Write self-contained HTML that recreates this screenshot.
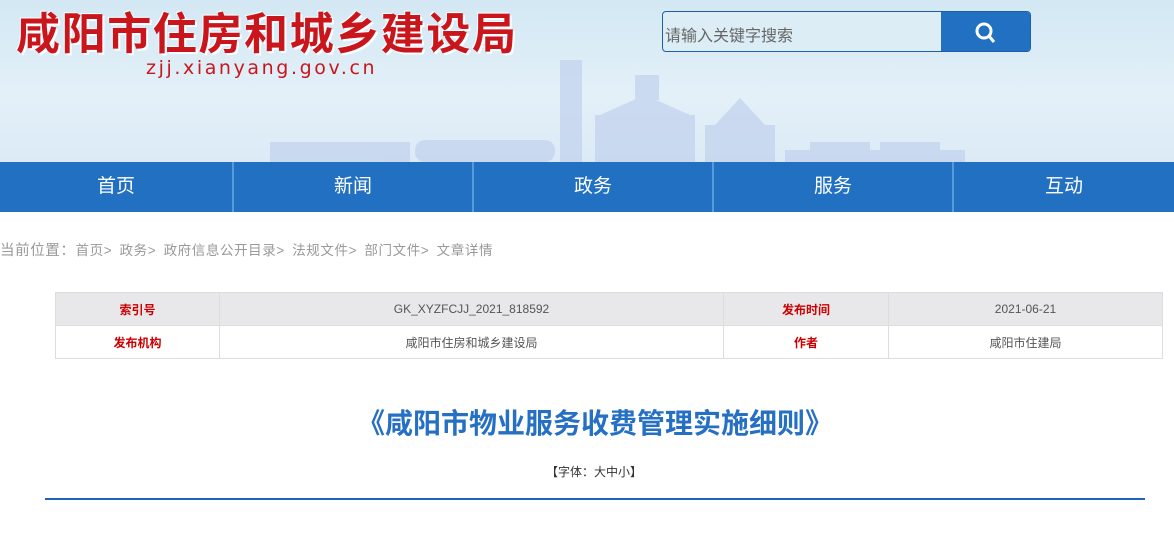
<!DOCTYPE html><html><head><meta charset="utf-8"><style>
*{margin:0;padding:0;box-sizing:border-box}
body{width:1174px;height:540px;background:#fff;font-family:"Liberation Sans","Noto Sans CJK SC",sans-serif;position:relative;overflow:hidden}
.hd{position:absolute;left:0;top:0;width:1174px;height:162px;background:linear-gradient(180deg,#d3e8f4 0%,#e3f0f8 60%,#dbeaf6 100%)}
.logo{position:absolute;left:16px;top:-2px;font-size:44px;font-weight:bold;color:#c9161d;letter-spacing:1.6px;text-shadow:2px 2px 0 #fff,-1px -1px 0 #fff;font-family:"Noto Sans CJK SC",sans-serif;white-space:nowrap}
.url{position:absolute;left:146px;top:57px;font-size:19px;color:#c9161d;letter-spacing:2.6px;font-family:"DejaVu Sans",sans-serif}
.sb{position:absolute;left:662px;top:11px;width:369px;height:41px;border:1px solid #1e5fa8;border-radius:4px;background:#dcedf6;overflow:hidden}
.sb span{position:absolute;left:2px;top:10px;font-size:16px;color:#666}
.sb .bt{position:absolute;right:0;top:0;width:89px;height:41px;background:#2270c2}
.nav{position:absolute;left:0;top:162px;width:1174px;height:50px;background:#2270c2;display:flex}
.nav div{width:234px;text-align:center;color:#fff;font-size:19px;line-height:50px;border-right:2px solid #5b9ad8}
.nav div:last-child{border:none;flex:1}
.bc{position:absolute;left:0;top:239px;font-size:13.5px;color:#999;letter-spacing:.6px;word-spacing:3px}
table{position:absolute;left:55px;top:292px;width:1108px;border-collapse:collapse;font-size:12px;color:#555}
td{border:1px solid #ddd;height:33px;text-align:center}
tr:first-child{background:#e8e8ea}
td.k{color:#c00;font-weight:bold}
h1{position:absolute;left:0;width:1174px;top:402px;text-align:center;font-size:28px;color:#2670c4;font-weight:bold;padding-left:16px}
.fs{position:absolute;left:0;width:1174px;top:463px;text-align:center;font-size:12px;color:#333;padding-left:14px}
.ln{position:absolute;left:45px;top:498px;width:1100px;height:2px;background:#2063b8}
</style></head><body>
<div class="hd">
<svg style="position:absolute;left:260px;top:50px" width="720" height="112" viewBox="0 0 720 112"><g fill="#c3d3ee" opacity=".75">
<rect x="10" y="92" width="140" height="20"/><rect x="155" y="90" width="140" height="22" rx="10"/>
<rect x="300" y="10" width="22" height="102"/><rect x="335" y="65" width="100" height="47"/><path d="M340 65 L385 45 L430 65Z"/><rect x="375" y="25" width="24" height="25"/>
<rect x="445" y="75" width="70" height="37"/><path d="M455 75 L480 48 L505 75Z"/>
<rect x="525" y="100" width="180" height="12"/><rect x="550" y="92" width="60" height="10"/><rect x="620" y="92" width="60" height="10"/></g></svg>
<div class="logo">咸阳市住房和城乡建设局</div>
<div class="url">zjj.xianyang.gov.cn</div>
<div class="sb"><span>请输入关键字搜索</span><div class="bt"><svg width="89" height="41"><circle cx="43" cy="19" r="7" fill="none" stroke="#fff" stroke-width="3"/><path d="M48 24 L53 30" stroke="#fff" stroke-width="3"/></svg></div></div>
</div>
<div class="nav"><div>首页</div><div style="width:240px">新闻</div><div style="width:240px">政务</div><div style="width:240px">服务</div><div>互动</div></div>
<div class="bc"><span style="font-size:14.5px">当前位置：</span>首页&gt; 政务&gt; 政府信息公开目录&gt; 法规文件&gt; 部门文件&gt; 文章详情</div>
<table><tr><td class="k" style="width:164px">索引号</td><td style="width:504px">GK_XYZFCJJ_2021_818592</td><td class="k" style="width:165px">发布时间</td><td>2021-06-21</td></tr>
<tr><td class="k">发布机构</td><td>咸阳市住房和城乡建设局</td><td class="k">作者</td><td>咸阳市住建局</td></tr></table>
<h1>《咸阳市物业服务收费管理实施细则》</h1>
<div class="fs">【字体：大中小】</div>
<div class="ln"></div>
</body></html>
